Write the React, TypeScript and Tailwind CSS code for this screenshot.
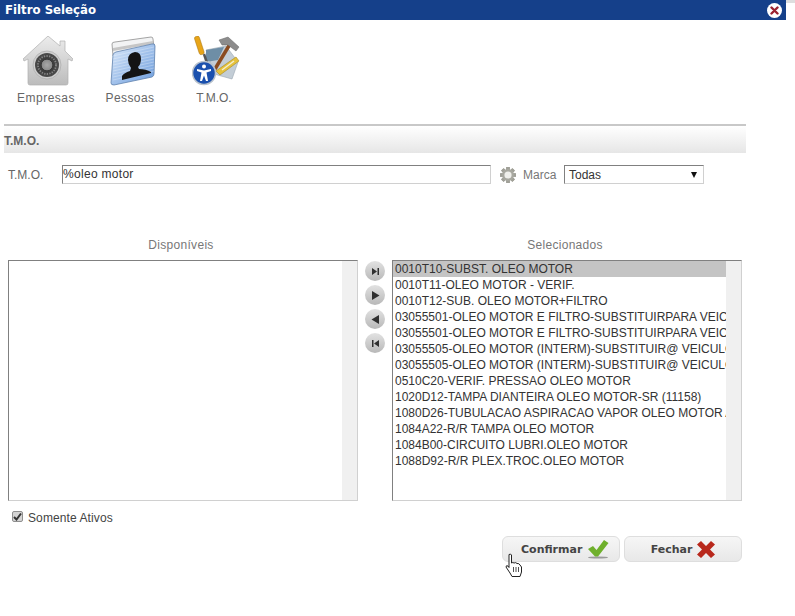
import React from "react";

const items = [
  "0010T10-SUBST. OLEO MOTOR",
  "0010T11-OLEO MOTOR - VERIF.",
  "0010T12-SUB. OLEO MOTOR+FILTRO",
  "03055501-OLEO MOTOR E FILTRO-SUBSTITUIRPARA VEICULOS",
  "03055501-OLEO MOTOR E FILTRO-SUBSTITUIRPARA VEICULOS",
  "03055505-OLEO MOTOR (INTERM)-SUBSTITUIR@ VEICULOS",
  "03055505-OLEO MOTOR (INTERM)-SUBSTITUIR@ VEICULOS",
  "0510C20-VERIF. PRESSAO OLEO MOTOR",
  "1020D12-TAMPA DIANTEIRA OLEO MOTOR-SR (11158)",
  "1080D26-TUBULACAO ASPIRACAO VAPOR OLEO MOTOR A",
  "1084A22-R/R TAMPA OLEO MOTOR",
  "1084B00-CIRCUITO LUBRI.OLEO MOTOR",
  "1088D92-R/R PLEX.TROC.OLEO MOTOR",
];

function House() {
  return (
    <svg width="50" height="50" viewBox="0 0 50 50" className="ml-[3px]">
      <defs>
        <linearGradient id="hs" x1="0" y1="0" x2="0" y2="1">
          <stop offset="0" stopColor="#ececec" />
          <stop offset="1" stopColor="#bcbcbc" />
        </linearGradient>
        <radialGradient id="dial">
          <stop offset="0" stopColor="#a8a8a8" />
          <stop offset="0.42" stopColor="#8c8c8c" />
          <stop offset="0.47" stopColor="#3a3a3a" />
          <stop offset="1" stopColor="#4c4c4c" />
        </radialGradient>
      </defs>
      <path d="M25 0 L37 10 V5 H42 V15 L50 23 L49 25 L45 23 V47 Q45 49 43 49 H7 Q5 49 5 47 V23 L1 25 L0 23 Z" fill="url(#hs)" stroke="#b0b0b0" strokeWidth="0.7" />
      <circle cx="24" cy="29" r="14" fill="#cfcfcf" stroke="#a4a4a4" strokeWidth="0.6" />
      <circle cx="24" cy="29" r="12" fill="url(#dial)" />
      <circle cx="24" cy="29" r="9" fill="none" stroke="#868686" strokeWidth="1.8" strokeDasharray="1.3 1.3" />
    </svg>
  );
}

function Folder() {
  return (
    <svg width="48" height="50" viewBox="0 0 48 50" className="ml-[3px]">
      <defs>
        <linearGradient id="fb" x1="0" y1="0" x2="1" y2="1">
          <stop offset="0" stopColor="#dbe9fa" />
          <stop offset="1" stopColor="#6a9bdc" />
        </linearGradient>
      </defs>
      <path d="M4 8 Q4 6 7 6 L43 1 Q45 1 45 3 L46 12 L5 20 Z" fill="#f2f3f4" stroke="#8e8e8e" strokeWidth="0.8" />
      <path d="M5 12 L45 5 L45 8 L5 15 Z" fill="#c6c6c6" />
      <path d="M5 19 Q5 17 8 16 L44 8 Q47 7 47 10 L46 38 Q46 40 44 41 L6 49 Q3 49 3 47 Z" fill="url(#fb)" stroke="#5f82ad" strokeWidth="0.8" />
      <g stroke="#ffffff" strokeOpacity="0.35" strokeWidth="0.8">
        {[20, 23, 26, 29, 32, 35, 38, 41, 44].map((y) => (
          <path key={y} d={`M5 ${y} L46 ${y - 9}`} />
        ))}
      </g>
      <path d="M14 44 L14 40 Q16 37 22 35 L23 32 Q20 28 20 24 Q20 17 27 16 Q33 16 33 23 Q33 28 30 31 L31 33 Q38 33 43 36 L43 37 Z" fill="#141414" />
    </svg>
  );
}

function Tools() {
  return (
    <svg width="50" height="50" viewBox="0 0 50 50" className="ml-[5px]">
      <path d="M14 14 L34 10 L46 26 L40 43 L22 38 Z" fill="#c3cdd6" stroke="#9aa6b0" strokeWidth="0.6" />
      <path d="M14 14 L32 11 L26 24 L14 26 Z" fill="#6e8ea6" />
      <rect x="5" y="0" width="5" height="19" rx="2" transform="rotate(-18 7 10)" fill="#e8a518" stroke="#a87510" strokeWidth="0.5" />
      <path d="M12 18 L16 30" stroke="#555" strokeWidth="2.5" />
      <path d="M23 33 L38 8" stroke="#8a4b20" strokeWidth="3.5" />
      <path d="M27 4 L36 1 L47 11 L44 15 L36 9 L30 9 Z" fill="#8c8c8c" stroke="#666" strokeWidth="0.5" />
      <path d="M24 35 L44 21 L47 25 L28 39 Z" fill="#e6c23c" stroke="#a88a1c" strokeWidth="0.6" />
      <path d="M30 34 L42 25" stroke="#f4efd0" strokeWidth="1.4" />
      <circle cx="12" cy="37" r="11.5" fill="#1a50ae" stroke="#b9c2cc" strokeWidth="1.5" />
      <circle cx="12" cy="30.5" r="2" fill="#fff" />
      <path d="M5 33 L12 34.5 L19 33 L19 35 L14.5 36.5 L16 45 L14 45 L12 39.5 L10 45 L8 45 L9.5 36.5 L5 35 Z" fill="#fff" />
    </svg>
  );
}

function Gear() {
  return (
    <svg width="18" height="18" viewBox="0 0 18 18">
      <g fill="#a0a098">
        {[0, 45, 90, 135, 180, 225, 270, 315].map((r) => (
          <rect key={r} x="7.2" y="1" width="3.6" height="16" rx="0.5" transform={`rotate(${r} 9 9)`} />
        ))}
      </g>
      <circle cx="9" cy="9" r="6" fill="#a8a8a0" />
      <circle cx="9" cy="9" r="3.6" fill="#efefeb" />
    </svg>
  );
}

function RoundBtn({ kind }: { kind: "last" | "next" | "prev" | "first" }) {
  return (
    <div className="flex h-5 w-5 items-center justify-center rounded-full bg-gradient-to-b from-[#e2e2e2] to-[#b8b8b8]">
      <svg width="9" height="9" viewBox="0 0 9 9" fill="#2f2f2f">
        {kind === "last" && <path d="M1 1 L6 4.5 L1 8 Z M6.5 1 H8 V8 H6.5 Z" />}
        {kind === "next" && <path d="M1 0 L8.5 4.5 L1 9 Z" />}
        {kind === "prev" && <path d="M8 0 L0.5 4.5 L8 9 Z" />}
        {kind === "first" && <path d="M8 1 L3 4.5 L8 8 Z M1 1 H2.5 V8 H1 Z" />}
      </svg>
    </div>
  );
}

function ListBox({ rows }: { rows: string[] }) {
  return (
    <div className="flex h-[241px] w-[350px] border border-t-[#808080] border-l-[#808080] border-b-[#d0d0d0] border-r-[#d0d0d0] bg-white">
      <div className="min-w-0 flex-1 overflow-hidden">
        {rows.map((t, i) => (
          <div
            key={i}
            className={`h-4 whitespace-nowrap pl-[2px] text-[12px] leading-4 text-[#333] ${i === 0 ? "bg-[#c4c4c4]" : ""}`}
          >
            {t}
          </div>
        ))}
      </div>
      <div className="w-[15px] shrink-0 bg-[#f0f0f0]" />
    </div>
  );
}

function Nav({ label, children, className, labelClass }: { label: string; children: React.ReactNode; className: string; labelClass: string }) {
  return (
    <div className={`flex flex-col items-center ${className}`}>
      <div className="flex h-[50px] items-end">{children}</div>
      <div className={`mt-[5px] text-[12px] leading-[14px] text-[#666] ${labelClass}`}>{label}</div>
    </div>
  );
}

export default function App() {
  return (
    <div className="h-[616px] w-[795px] overflow-hidden bg-white font-['Liberation_Sans',Arial,sans-serif]">
      <div className="flex items-start">
        <div className="flex h-5 w-[786px] items-center justify-between bg-[#15408a] pl-[5px] pr-[4px]">
          <span className="font-['DejaVu_Sans',sans-serif] text-[11.75px] font-bold leading-5 text-white">Filtro Seleção</span>
          <div className="flex h-[15px] w-[15px] items-center justify-center rounded-full bg-white">
            <svg width="9" height="9" viewBox="0 0 9 9">
              <path d="M1.5 1.5 L7.5 7.5 M7.5 1.5 L1.5 7.5" stroke="#9b2230" strokeWidth="2.4" strokeLinecap="round" />
            </svg>
          </div>
        </div>
        <div className="h-[3px] w-[9px] bg-[#dedede]" />
      </div>

      <div className="flex h-[104px] items-start pt-[16px]">
        <Nav label="Empresas" labelClass="tracking-[0.5px]" className="ml-[16px] w-[60px]"><House /></Nav>
        <Nav label="Pessoas" labelClass="tracking-[0.4px]" className="ml-[24px] w-[60px]"><Folder /></Nav>
        <Nav label="T.M.O." labelClass="" className="ml-[24px] w-[60px]"><Tools /></Nav>
      </div>

      <div className="ml-[4px] h-[29px] w-[742px] border-t-2 border-[#c8c8c8] bg-gradient-to-b from-white to-[#e6e6e6] pt-[8px]">
        <div className="text-[12px] font-bold leading-[14px] text-[#666]">T.M.O.</div>
      </div>

      <div className="mt-[12px] flex h-[19px] items-center">
        <span className="ml-[8px] w-[54px] text-[12px] text-[#666]">T.M.O.</span>
        <div className="h-[19px] w-[429px] border border-t-[#808080] border-l-[#808080] border-b-[#d0d0d0] border-r-[#d0d0d0] text-[12px] leading-[17px] tracking-[0.3px] text-[#333]">%oleo motor</div>
        <div className="ml-[8px] flex w-[18px]"><Gear /></div>
        <span className="ml-[6px] w-[41px] text-[12px] text-[#777]">Marca</span>
        <div className="flex h-[19px] w-[140px] items-center justify-between border border-t-[#808080] border-l-[#808080] border-b-[#d0d0d0] border-r-[#d0d0d0] pl-[4px] pr-[6px] text-[12px] text-[#333]">
          <span>Todas</span>
          <span className="h-0 w-0 border-x-[3.5px] border-t-[6px] border-x-transparent border-t-[#111]" />
        </div>
      </div>

      <div className="mt-[54px] flex h-[16px] items-start text-[12px] leading-[14px] tracking-[0.3px] text-[#777]">
        <div className="ml-[8px] w-[346px] text-center">Disponíveis</div>
        <div className="ml-[38px] w-[346px] text-center">Selecionados</div>
      </div>

      <div className="mt-[6px] flex items-start pl-[8px]">
        <ListBox rows={[]} />
        <div className="ml-[7px] mt-[1px] flex w-[27px] flex-col items-start gap-[4px]">
          <RoundBtn kind="last" />
          <RoundBtn kind="next" />
          <RoundBtn kind="prev" />
          <RoundBtn kind="first" />
        </div>
        <ListBox rows={items} />
      </div>

      <div className="ml-[12px] mt-[10px] flex h-[14px] items-start">
        <div className="flex h-[11px] w-[11px] items-center justify-center rounded-[2px] border border-[#8f8f8f] bg-[#d4d4d4]">
          <svg width="9" height="9" viewBox="0 0 9 9">
            <path d="M1 5 L3.5 7.5 L8 1.5" fill="none" stroke="#333" strokeWidth="2" />
          </svg>
        </div>
        <span className="ml-[5px] text-[12px] leading-[14px] tracking-[0.1px] text-[#444]">Somente Ativos</span>
      </div>

      <div className="ml-[502px] mt-[11px] flex gap-[4px] font-['DejaVu_Sans',sans-serif] text-[11px] font-bold text-[#444]">
        <div className="relative flex h-[26px] w-[118px] items-center gap-[6px] rounded-[6px] border border-[#dedede] bg-gradient-to-b from-[#f6f6f6] to-[#e8e8e8] pl-[18px]">
          <span className="mt-[2px]">Confirmar</span>
          <svg width="21" height="19" viewBox="0 0 21 19">
            <ellipse cx="10" cy="17.5" rx="10" ry="1" fill="#9a9a9a" />
            <path d="M0 9 L5 6 L8.5 10 L16 0 L20.5 3 L10 16.5 L7 16.5 Z" fill="#6fb02c" />
          </svg>
          <svg className="absolute left-[2px] top-[16px]" width="19" height="25" viewBox="0 0 19 25">
            <path d="M4 1.5 Q6 0.5 6.5 2 V10 Q8 9 9 10 Q11 9 12 10.5 Q14 10 15 12 L16.5 14 V19 L15 23.5 H7 L5 20 L1 14 Q1 12 3 13 L4 14.5 Z" fill="#fff" stroke="#222" strokeWidth="1" />
            <path d="M8.5 14 V19 M11 14 V19 M13.5 14 V19" stroke="#222" strokeWidth="0.8" />
          </svg>
        </div>
        <div className="flex h-[26px] w-[118px] items-center justify-center gap-[5px] rounded-[6px] border border-[#dedede] bg-gradient-to-b from-[#f6f6f6] to-[#e8e8e8]">
          <span className="mt-[2px]">Fechar</span>
          <svg width="18" height="17" viewBox="0 0 18 17">
            <path d="M0 3.5 L4 0 L9 5 L14 0 L18 3.5 L13 8.5 L18 13.5 L14 17 L9 12 L4 17 L0 13.5 L5 8.5 Z" fill="#b8281c" />
          </svg>
        </div>
      </div>
    </div>
  );
}
